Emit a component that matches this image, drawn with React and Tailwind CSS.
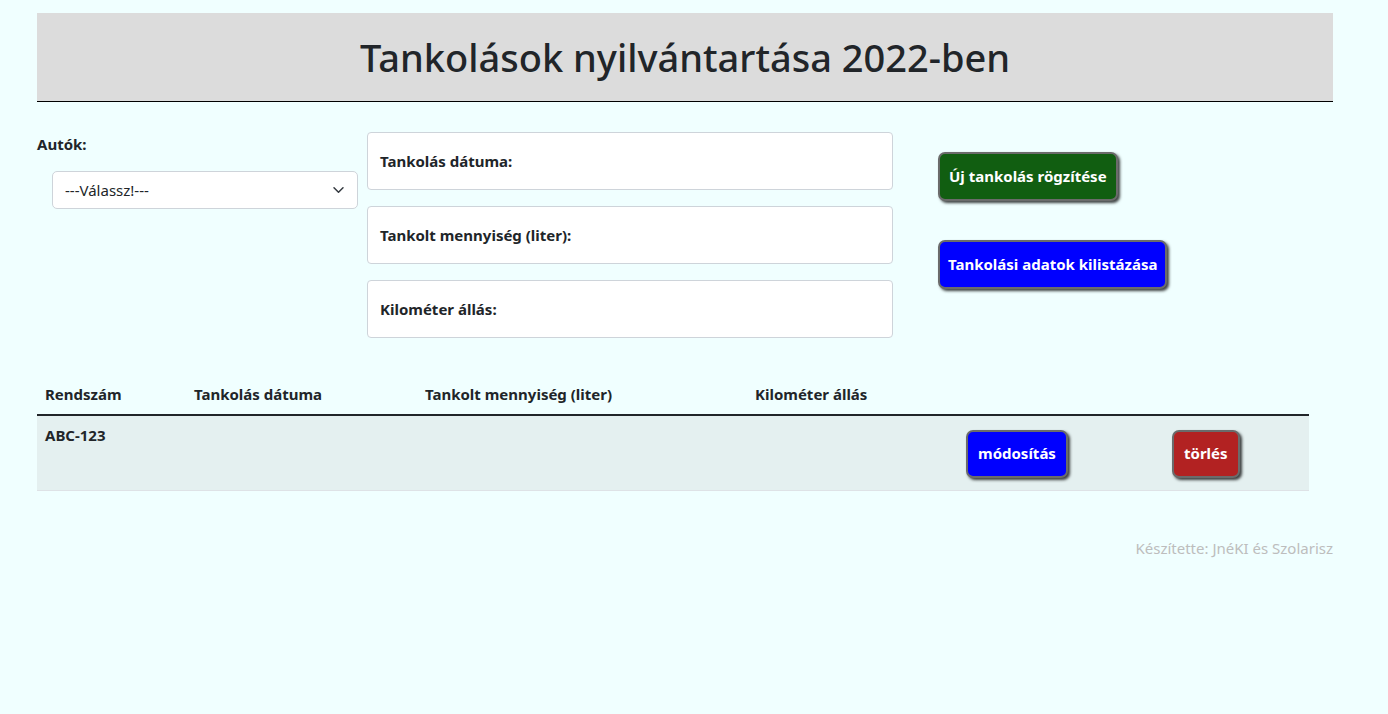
import { useState } from "react";

const fields = ["Tankolás dátuma:", "Tankolt mennyiség (liter):", "Kilométer állás:"];

const btnBase =
  "rounded-[7px] border-2 border-[#6b6b6b] text-[15px] font-bold text-white shadow-[2px_2px_3px_rgba(0,0,0,0.75)]";

export default function App() {
  const [car, setCar] = useState("");

  return (
    <div
      className="min-h-[714px] bg-[#f0ffff] pt-[13px] text-[#212529]"
      style={{ fontFamily: '"Noto Sans", "Open Sans", sans-serif' }}
    >
      <div className="ml-[37px] w-[1296px]">
        <header className="flex h-[89px] items-center justify-center border-b border-black bg-[#dcdcdc]">
          <h1 className="text-[38px] font-medium leading-none">Tankolások nyilvántartása 2022-ben</h1>
        </header>

        <div className="mt-[30px] flex">
          <div className="w-[330px]">
            <p className="text-[15px] font-bold leading-6">Autók:</p>
            <div className="relative ml-[15px] mt-[15px] w-[306px]">
              <select
                value={car}
                onChange={(e) => setCar(e.target.value)}
                className="h-[38px] w-full appearance-none rounded-[5px] border border-[#ced4da] bg-white pl-[12px] text-[15px] text-[#212529]"
              >
                <option value="">---Válassz!---</option>
                <option value="ABC-123">ABC-123</option>
              </select>
              <svg
                className="pointer-events-none absolute right-[13px] top-[13px]"
                width="13"
                height="12"
                viewBox="0 0 16 16"
                fill="none"
                stroke="#343a40"
                strokeWidth="2"
                strokeLinecap="round"
                strokeLinejoin="round"
              >
                <path d="M2 5l6 6 6-6" />
              </svg>
            </div>
          </div>

          <div className="flex w-[526px] flex-col gap-[16px]">
            {fields.map((f) => (
              <div
                key={f}
                className="flex h-[58px] items-center rounded-[4px] border border-[#ced4da] bg-white px-[12px]"
              >
                <span className="text-[15px] font-bold">{f}</span>
              </div>
            ))}
          </div>

          <div className="ml-[45px] flex flex-col items-start pt-[20px]">
            <button className={`${btnBase} h-[49px] bg-[#115e11] px-[9px]`}>Új tankolás rögzítése</button>
            <button className={`${btnBase} mt-[39px] h-[49px] bg-[#0000ff] px-[8px]`}>
              Tankolási adatok kilistázása
            </button>
          </div>
        </div>

        <table className="mt-[41px] w-[1272px] table-fixed border-collapse text-left text-[15px]">
          <colgroup>
            <col className="w-[149px]" />
            <col className="w-[231px]" />
            <col className="w-[330px]" />
            <col className="w-[211px]" />
            <col className="w-[206px]" />
            <col />
          </colgroup>
          <thead>
            <tr className="border-b-2 border-[#212529]">
              <th className="px-[8px] pb-[8px] pt-[4px] font-bold">Rendszám</th>
              <th className="px-[8px] pb-[8px] pt-[4px] font-bold">Tankolás dátuma</th>
              <th className="px-[8px] pb-[8px] pt-[4px] font-bold">Tankolt mennyiség (liter)</th>
              <th className="px-[8px] pb-[8px] pt-[4px] font-bold">Kilométer állás</th>
              <th />
              <th />
            </tr>
          </thead>
          <tbody>
            <tr className="border-b border-[#dee2e6] bg-[#e4f0f0] align-top">
              <td className="px-[8px] py-[8px] font-bold">ABC-123</td>
              <td className="px-[8px] py-[8px]"></td>
              <td className="px-[8px] py-[8px]"></td>
              <td className="px-[8px] py-[8px]"></td>
              <td className="px-[8px] pb-[12px] pt-[14px]">
                <button className={`${btnBase} h-[48px] bg-[#0000ff] px-[10px]`}>módosítás</button>
              </td>
              <td className="px-[8px] pb-[12px] pt-[14px]">
                <button className={`${btnBase} h-[48px] bg-[#b22222] px-[10px]`}>törlés</button>
              </td>
            </tr>
          </tbody>
        </table>

        <footer className="mt-[46px] text-right text-[15px] text-[#bdbdbd]">Készítette: JnéKI és Szolarisz</footer>
      </div>
    </div>
  );
}
